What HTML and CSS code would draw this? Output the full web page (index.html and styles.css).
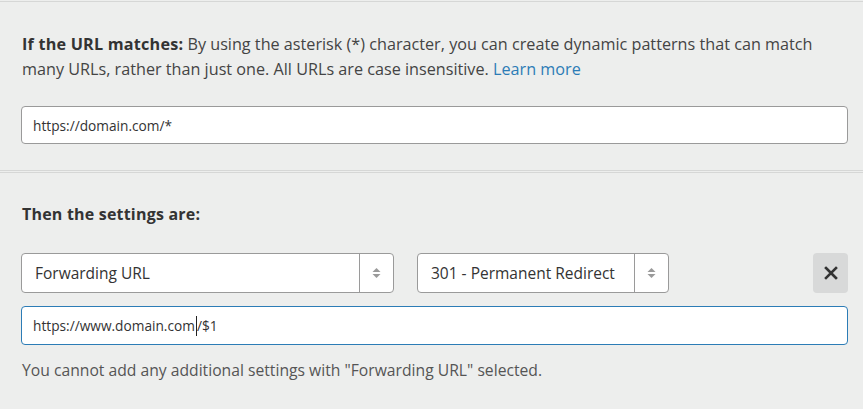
FILE: index.html
```html
<!DOCTYPE html>
<html>
<head>
<meta charset="utf-8">
<link rel="stylesheet" href="styles.css">
</head>
<body>
<div class="page">
  <section class="block block-match">
    <p class="desc"><strong>If the URL matches:</strong> By using the asterisk (*) character, you can create dynamic patterns that can match many URLs, rather than just one. All URLs are case insensitive. <a class="link" href="#">Learn more</a></p>
    <div class="input">https://domain.com/*</div>
  </section>
  <section class="block block-settings">
    <h3 class="heading">Then the settings are:</h3>
    <div class="row">
      <div class="select select-wide">
        <span class="select-label">Forwarding URL</span>
        <span class="select-arrow"><svg width="9" height="12" viewBox="0 0 9 12"><path d="M4.5 1 L8.5 5 H0.5 Z" fill="#9a9a9a"/><path d="M4.5 11 L8.5 7 H0.5 Z" fill="#9a9a9a"/></svg></span>
      </div>
      <div class="select select-narrow">
        <span class="select-label">301 - Permanent Redirect</span>
        <span class="select-arrow"><svg width="9" height="12" viewBox="0 0 9 12"><path d="M4.5 1 L8.5 5 H0.5 Z" fill="#9a9a9a"/><path d="M4.5 11 L8.5 7 H0.5 Z" fill="#9a9a9a"/></svg></span>
      </div>
      <button class="remove"><svg width="14" height="14" viewBox="0 0 14 14"><path d="M2 2 L12 12 M12 2 L2 12" stroke="#333" stroke-width="2.6" stroke-linecap="square"/></svg></button>
    </div>
    <div class="input input-focus">https://www.domain.com<span class="caret"></span>/$1</div>
    <p class="help">You cannot add any additional settings with "Forwarding URL" selected.</p>
  </section>
</div>
</body>
</html>
```

FILE: styles.css
```css
* { box-sizing: border-box; }
html, body { margin: 0; padding: 0; }
body {
  background: #edeeed;
  font-family: "Open Sans", "Noto Sans", sans-serif;
  color: #333;
  width: 863px;
  height: 409px;
  overflow: hidden;
}
.page { padding-top: 1px; }
.block { padding: 0 15px 0 21px; }
.block-match {
  border-top: 1px solid #d6d7d6;
  border-bottom: 1px solid #d6d7d6;
  padding-top: 30px;
  padding-bottom: 26px;
}
.block-settings {
  border-top: 1px solid #d6d7d6;
  margin-top: 1px;
  padding-top: 29px;
}
.desc {
  margin: 0 0 24px 1px;
  font-size: 16.2px;
  line-height: 25px;
  color: #444;
}
.desc strong { color: #333; font-weight: 700; letter-spacing: 0.2px; }
.link { color: #2c7cb6; text-decoration: none; }
.input {
  height: 38px;
  width: 827px;
  background: #fff;
  border: 1px solid #9a9a9a;
  border-radius: 4px;
  padding: 0 11px;
  display: flex;
  align-items: center;
  font-size: 13.7px;
  color: #333;
}
.heading {
  margin: 0 0 27px 1px;
  font-size: 16px;
  line-height: 24px;
  font-weight: 700;
  letter-spacing: 0.2px;
  color: #333;
}
.row {
  display: flex;
  align-items: stretch;
  height: 40px;
  margin-bottom: 13px;
}
.select {
  display: flex;
  align-items: stretch;
  background: #fff;
  border: 1px solid #9a9a9a;
  border-radius: 4px;
  font-size: 15.5px;
  color: #333;
}
.select-wide { width: 373px; }
.select-narrow { width: 252px; margin-left: 23px; }
.select-label {
  flex: 1;
  display: flex;
  align-items: center;
  padding-left: 13px;
}
.select-arrow {
  width: 34px;
  border-left: 1px solid #9a9a9a;
  display: flex;
  align-items: center;
  justify-content: center;
}
.remove {
  margin-left: auto;
  width: 35px;
  height: 40px;
  background: #d8d9d9;
  border: none;
  border-radius: 4px;
  padding: 0;
  display: flex;
  align-items: center;
  justify-content: center;
}
.input-focus {
  border-color: #2c7cb6;
  height: 39px;
}
.caret {
  display: inline-block;
  width: 1px;
  height: 20px;
  background: #222;
  margin-left: 1px;
}
.help {
  margin: 13px 0 0 1px;
  font-size: 15.7px;
  line-height: 24px;
  color: #555;
}
```
